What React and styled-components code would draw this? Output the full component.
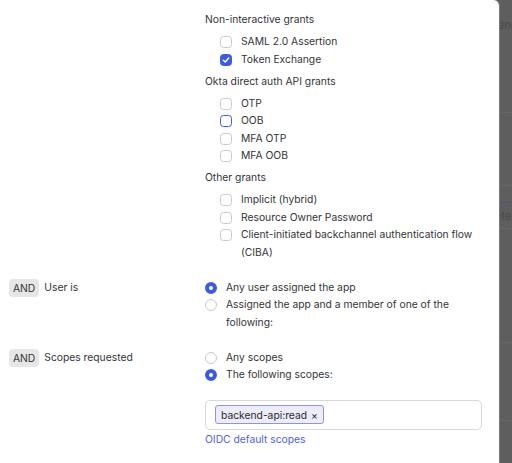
import styled, { createGlobalStyle } from "styled-components";

const GlobalStyle = createGlobalStyle`
  html, body {
    margin: 0;
    padding: 0;
    background: #5e5e5e;
  }
  body {
    font-family: Inter, "Noto Sans", "Liberation Sans", sans-serif;
    font-size: 10.3px;
    color: #343438;
  }
`;

const Screen = styled.div`
  display: flex;
  width: 512px;
  height: 463px;
  overflow: hidden;
`;

const Drawer = styled.div`
  width: 500px;
  flex: none;
  background: #fff;
  border-top-right-radius: 6px;
  border-right: 1px solid #7a7a7a;
  box-sizing: border-box;
  padding: 11px 17px 0 9px;
`;

const Backdrop = styled.div`
  flex: 1;
  overflow: hidden;
  background: #5e5e5e;
  display: flex;
  flex-direction: column;
`;

const BackdropRow = styled.div`
  margin-left: -22px;
  height: ${(p) => p.h}px;
  box-sizing: border-box;
  border-bottom: 1px solid ${(p) => (p.accent ? "#4f5477" : "#676767")};
  color: ${(p) => (p.accent ? "#35397a" : "#4a4a4a")};
  font-size: 11px;
  white-space: nowrap;
  display: flex;
  align-items: ${(p) => (p.top ? "flex-start" : "center")};
  padding-top: ${(p) => (p.top ? 18 : 0)}px;
`;

const Row = styled.div`
  display: grid;
  grid-template-columns: 196px 1fr;
  margin-bottom: ${(p) => p.gap || 0}px;
`;

const LeftCell = styled.div`
  display: flex;
  align-items: flex-start;
  gap: 5px;
  line-height: 17.5px;
`;

const AndBadge = styled.span`
  display: inline-block;
  background: #e6e6e6;
  border-radius: 4px;
  padding: 0 4px;
  font-size: 10.3px;
  line-height: 18px;
  color: #333;
`;

const Group = styled.div`
  margin-bottom: 4.5px;
`;

const GroupTitle = styled.div`
  line-height: 17.5px;
  margin-bottom: 4.5px;
`;

const List = styled.div`
  display: flex;
  flex-direction: column;
  padding-left: ${(p) => (p.indent ? 15 : 0)}px;
`;

const Option = styled.label`
  display: flex;
  align-items: flex-start;
  gap: 9px;
  line-height: 17.5px;
`;

const Box = styled.span`
  flex: none;
  width: 12px;
  height: 12px;
  margin-top: 3px;
  box-sizing: border-box;
  border-radius: ${(p) => (p.round ? "50%" : "3.5px")};
  border: ${(p) =>
    p.checked
      ? p.round
        ? "4px solid #3d5be1"
        : "1px solid #3d5be1"
      : p.focus
      ? "1.5px solid #3d5be1"
      : "1px solid #cacaca"};
  background: ${(p) => (p.checked && !p.round ? "#3d5be1" : "#fff")};
  display: flex;
  align-items: center;
  justify-content: center;
`;

const ScopeInput = styled.div`
  margin-top: 16px;
  height: 30px;
  box-sizing: border-box;
  border: 1px solid #d8d8d8;
  border-radius: 5px;
  display: flex;
  align-items: center;
  padding: 0 9px;
`;

const Chip = styled.span`
  display: inline-flex;
  align-items: center;
  gap: 4px;
  height: 19px;
  padding: 0 5px;
  box-sizing: border-box;
  background: #ececfb;
  border: 1px solid #8d93e6;
  border-radius: 3px;
  color: #2a2a2e;
`;

const LinkText = styled.a`
  display: block;
  margin-top: 1px;
  color: #4f63e0;
  line-height: 17.5px;
  text-decoration: none;
`;

const Check = () => (
  <svg width="8" height="8" viewBox="0 0 8 8">
    <path d="M1.3 4.2 L3.2 6 L6.7 2" fill="none" stroke="#fff" strokeWidth="1.5" strokeLinecap="round" strokeLinejoin="round" />
  </svg>
);

const CheckOption = ({ label, checked, focus }) => (
  <Option>
    <Box checked={checked} focus={focus}>{checked && <Check />}</Box>
    <span>{label}</span>
  </Option>
);

const RadioOption = ({ label, checked }) => (
  <Option>
    <Box round checked={checked} />
    <span>{label}</span>
  </Option>
);

const grantGroups = [
  {
    title: "Non-interactive grants",
    items: [{ label: "SAML 2.0 Assertion" }, { label: "Token Exchange", checked: true }],
  },
  {
    title: "Okta direct auth API grants",
    items: [{ label: "OTP" }, { label: "OOB", focus: true }, { label: "MFA OTP" }, { label: "MFA OOB" }],
  },
  {
    title: "Other grants",
    items: [
      { label: "Implicit (hybrid)" },
      { label: "Resource Owner Password" },
      { label: "Client-initiated backchannel authentication flow (CIBA)" },
    ],
  },
];

export default function App() {
  return (
    <Screen>
      <GlobalStyle />
      <Drawer>
        <Row gap={13}>
          <LeftCell />
          <div>
            {grantGroups.map((g) => (
              <Group key={g.title}>
                <GroupTitle>{g.title}</GroupTitle>
                <List indent>
                  {g.items.map((it) => (
                    <CheckOption key={it.label} {...it} />
                  ))}
                </List>
              </Group>
            ))}
          </div>
        </Row>
        <Row gap={17.5}>
          <LeftCell>
            <AndBadge>AND</AndBadge>
            <span>User is</span>
          </LeftCell>
          <List>
            <RadioOption label="Any user assigned the app" checked />
            <RadioOption label="Assigned the app and a member of one of the following:" />
          </List>
        </Row>
        <Row>
          <LeftCell>
            <AndBadge>AND</AndBadge>
            <span>Scopes requested</span>
          </LeftCell>
          <div>
            <List>
              <RadioOption label="Any scopes" />
              <RadioOption label="The following scopes:" checked />
            </List>
            <ScopeInput>
              <Chip>
                backend-api:read <span>×</span>
              </Chip>
            </ScopeInput>
            <LinkText href="#">OIDC default scopes</LinkText>
          </div>
        </Row>
      </Drawer>
      <Backdrop>
        <BackdropRow h={113} top>
          ⌄ Generate
        </BackdropRow>
        <BackdropRow h={73} />
        <BackdropRow h={17} accent />
        <BackdropRow h={26}>Delete</BackdropRow>
        <BackdropRow h={114} />
        <BackdropRow h={78} />
      </Backdrop>
    </Screen>
  );
}
